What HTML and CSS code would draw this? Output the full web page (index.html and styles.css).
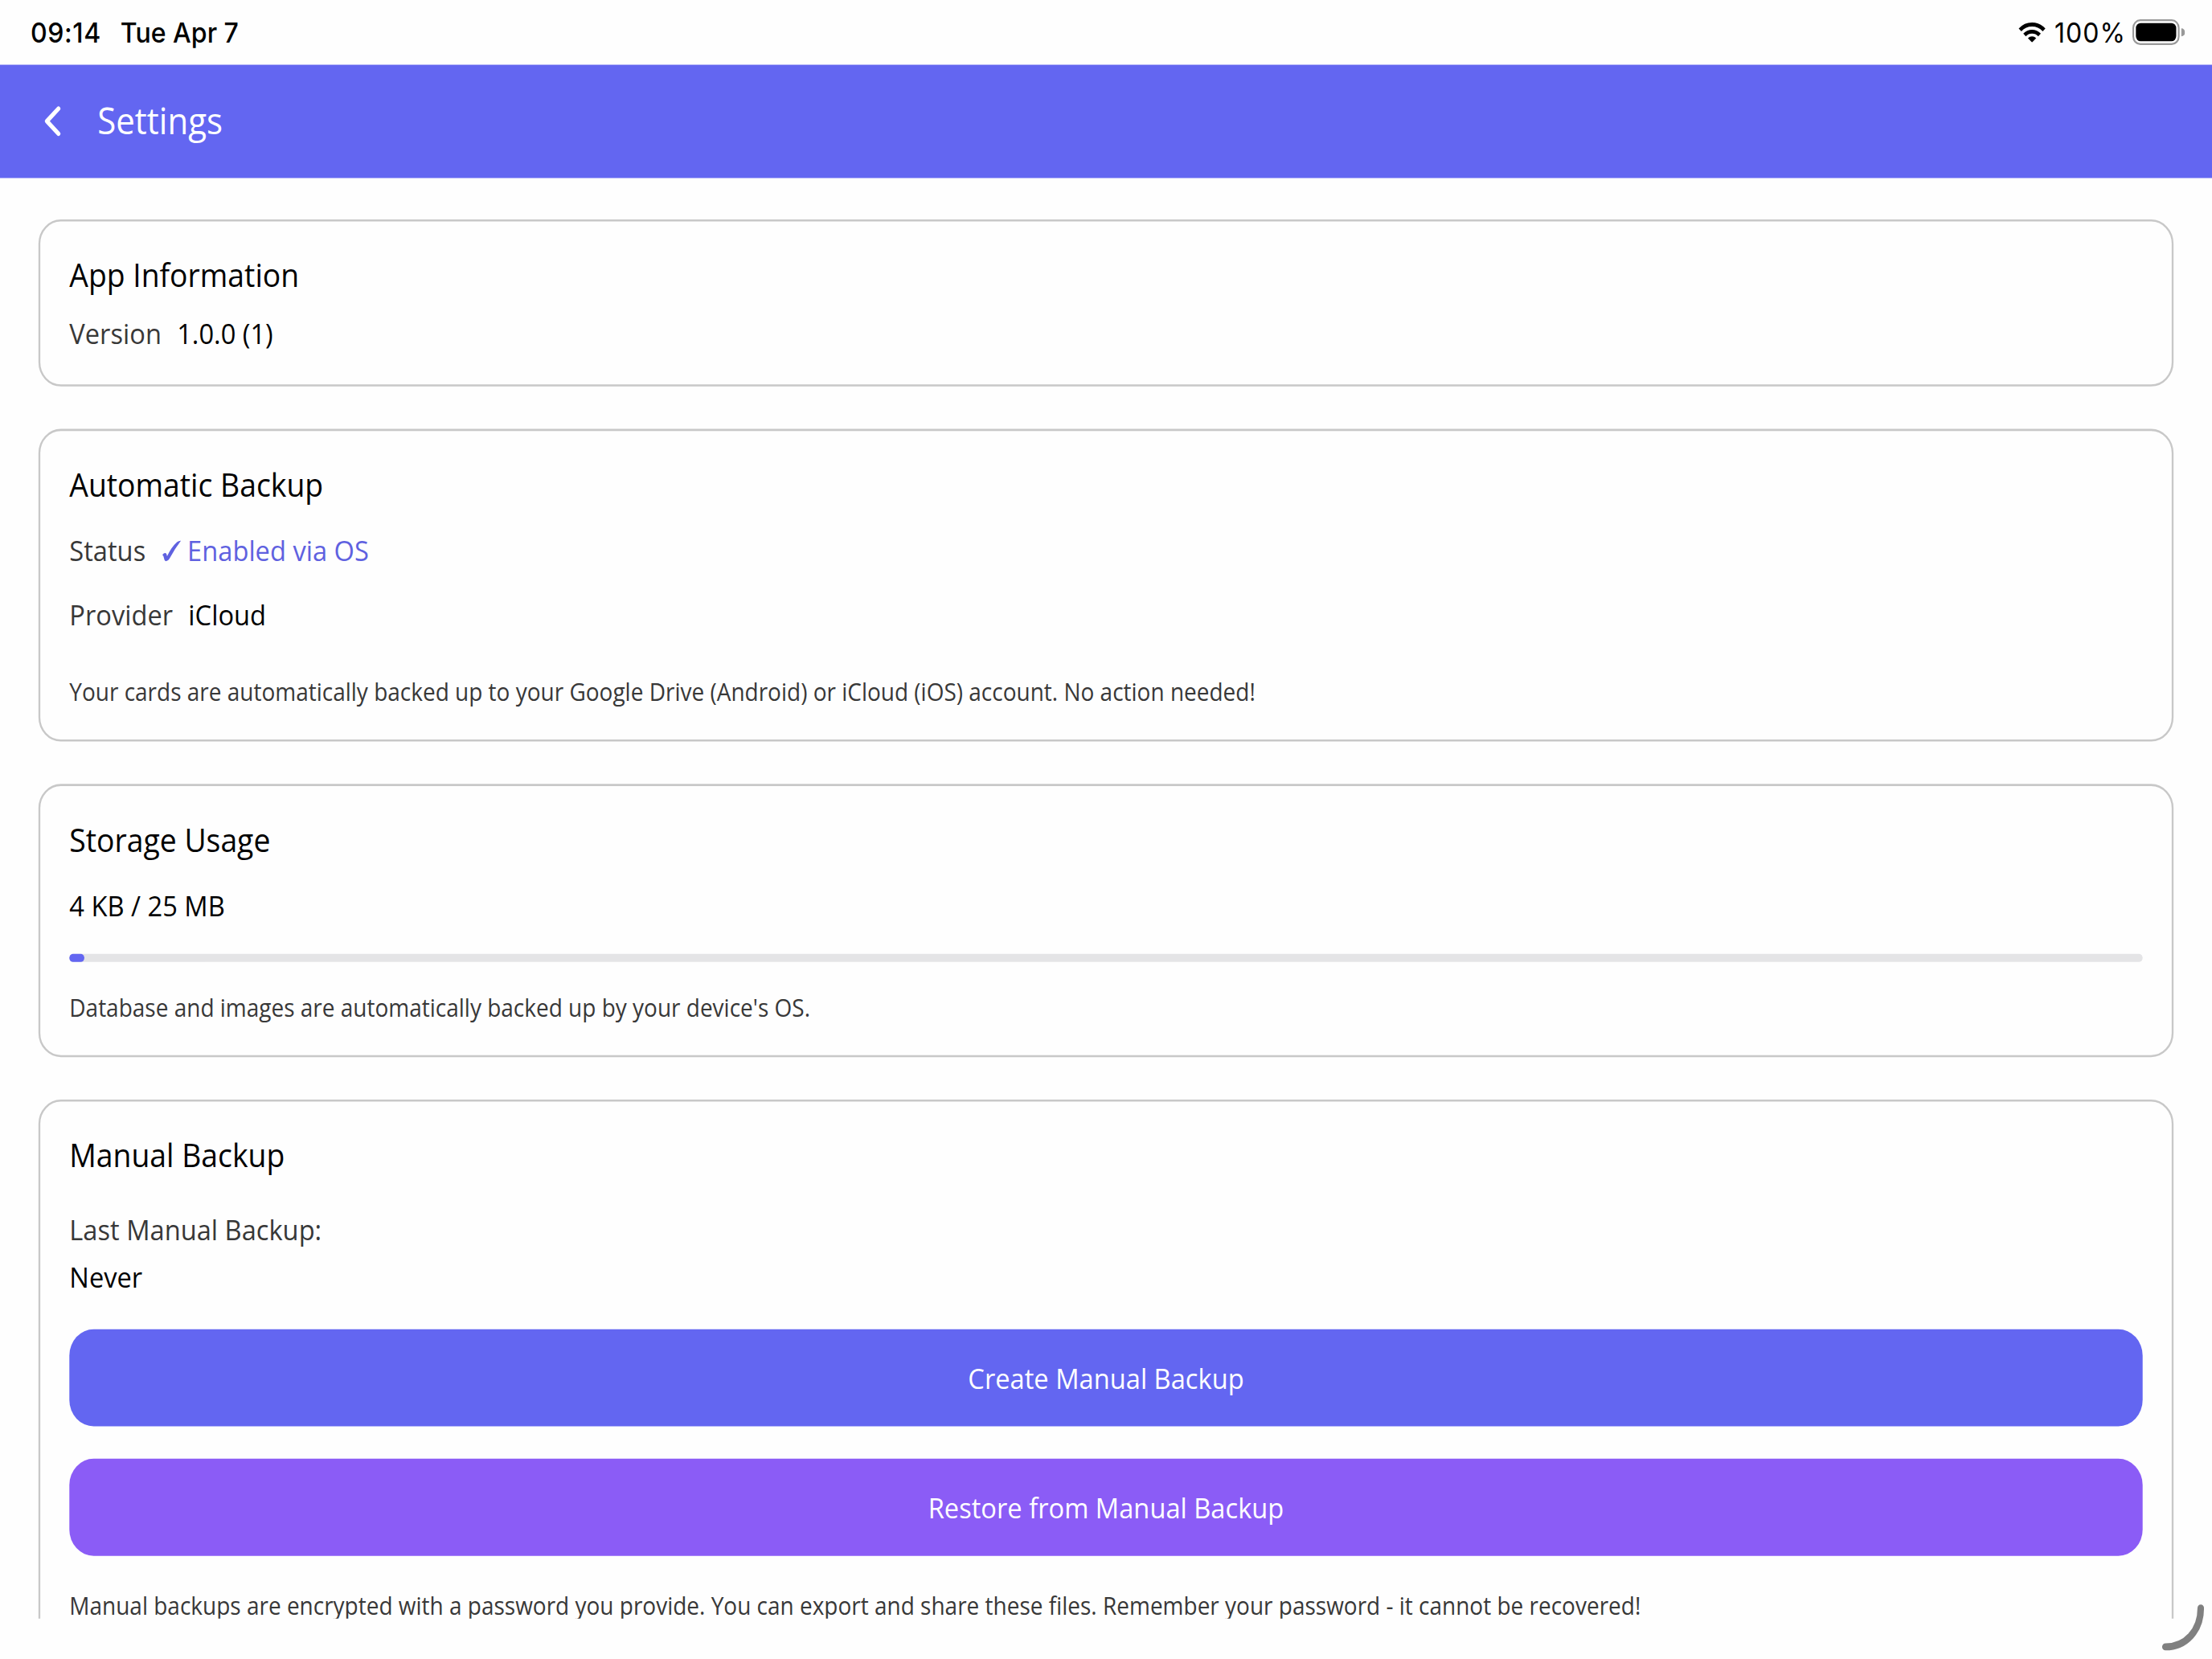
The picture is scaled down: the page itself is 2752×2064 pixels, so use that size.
FILE: index.html
```html
<!DOCTYPE html>
<html lang="en">
<head>
    <meta charset="UTF-8">
    <title>Settings</title>
    <link rel="stylesheet" href="styles.css">
</head>
<body>
    <div class="screen">
        <div class="status-bar">
            <span class="time">09:14</span>
            <span class="date">Tue Apr 7</span>
            <div class="status-icons">
                <svg class="wifi" viewBox="0 0 30 20">
                    <path d="M2.2 7.6 A18 18 0 0 1 27.8 7.6" fill="none" stroke="#000" stroke-width="4"/>
                    <path d="M7 12.6 A11.3 11.3 0 0 1 23 12.6" fill="none" stroke="#000" stroke-width="3.8"/>
                    <path d="M15 20 L10.6 15.8 A6.3 6.3 0 0 1 19.4 15.8 Z"/>
                </svg>
                <span class="percent">100%</span>
                <svg class="battery" viewBox="0 0 56 26">
                    <rect x="1" y="1" width="48.5" height="23.6" rx="7.5" fill="none" stroke="#999" stroke-width="1.8"/>
                    <rect x="3.8" y="3.8" width="43" height="18" rx="5"/>
                    <path d="M52.3 9 A4 4 0 0 1 52.3 17 Z" fill="#999"/>
                </svg>
            </div>
        </div>

        <div class="header">
            <svg class="back" viewBox="0 0 20 32">
                <path d="M15.4 3.4 L3 15.8 L15.4 28.2" fill="none" stroke="#fff" stroke-width="4.3" stroke-linecap="round" stroke-linejoin="round"/>
            </svg>
            <h1>Settings</h1>
        </div>

        <div class="content">
            <div class="card">
                <h2>App Information</h2>
                <div class="row row-tight">
                    <span class="label">Version</span>
                    <span>1.0.0 (1)</span>
                </div>
            </div>

            <div class="card">
                <h2>Automatic Backup</h2>
                <div class="row">
                    <span class="label">Status</span>
                    <span class="enabled">
                        <svg class="check" viewBox="0 0 22 28" preserveAspectRatio="none">
                            <path d="M0.3 19.2 Q2.2 16.6 4 17 Q5.4 17.6 5.8 21 Q11 9 17.6 2.4 Q19.6 0.6 22 0.8 Q15 11 8.6 24.4 Q6.8 28 4.2 27.8 Q2.6 27.4 2.3 24.4 Q1.8 20.4 0.3 19.2 Z"/>
                        </svg>Enabled via OS</span>
                </div>
                <div class="row">
                    <span class="label">Provider</span>
                    <span>iCloud</span>
                </div>
                <p class="note note-far">Your cards are automatically backed up to your Google Drive (Android) or iCloud (iOS) account. No action needed!</p>
            </div>

            <div class="card">
                <h2>Storage Usage</h2>
                <div class="row">4 KB / 25 MB</div>
                <div class="progress"><div class="progress-fill"></div></div>
                <p class="note note-near">Database and images are automatically backed up by your device's OS.</p>
            </div>

            <div class="card">
                <h2>Manual Backup</h2>
                <div class="last-backup">
                    <span class="label">Last Manual Backup:</span>
                    <span>Never</span>
                </div>
                <button class="btn btn-primary">Create Manual Backup</button>
                <button class="btn btn-secondary">Restore from Manual Backup</button>
                <p class="note">Manual backups are encrypted with a password you provide. You can export and share these files. Remember your password - it cannot be recovered!</p>
            </div>
        </div>

        <!-- corner handle -->
        <svg class="corner" viewBox="0 0 60 64">
            <path d="M48 13.7 C48 36 32 52 10.3 52" fill="none" stroke="#808080" stroke-width="7" stroke-linecap="round"/>
        </svg>
    </div>
</body>
</html>
```

FILE: styles.css
```css
* {
    box-sizing: border-box;
}
html, body {
    margin: 0;
    height: 2064px;
    overflow: hidden;
    background: #fefefe;
}
/* 2360x1640 tablet layout stretched to fill the window */
.screen {
    position: relative;
    width: 2360px;
    height: 1640px;
    display: flex;
    flex-direction: column;
    transform: scale(1.166102, 1.258537);
    transform-origin: 0 0;
    font-family: 'Open Sans', sans-serif;
    font-size: 28px;
    line-height: 38px;
    color: #000;
}
h1, h2, p {
    margin: 0;
    font-weight: 400;
}

.status-bar {
    height: 64px;
    flex: none;
    display: flex;
    align-items: center;
    padding: 0 29px 0 32.5px;
    font-family: Inter, sans-serif;
    font-size: 27.5px;
    font-weight: 500;
    white-space: nowrap;
}
.time {
    width: 96px;
    letter-spacing: 0.5px;
}
.status-icons {
    display: flex;
    align-items: center;
    margin-left: auto;
}
.wifi {
    width: 30px;
    height: 20px;
    margin-right: 9px;
}
.percent {
    width: 83px;
    font-weight: 400;
    letter-spacing: 0.8px;
}
.battery {
    width: 56px;
    height: 26px;
}

.header {
    height: 112px;
    flex: none;
    display: flex;
    align-items: center;
    padding: 0 0 0.5px 47px;
    background: #6366f1;
    color: #fff;
}
.back {
    width: 20px;
    height: 32px;
    margin-right: 37px;
}
h1 {
    font-size: 36px;
    line-height: 49px;
}

.content {
    height: 1424px;
    flex: none;
    overflow: hidden;
    padding: 41px 41px 0;
}
.card {
    border: 2px solid #c8c8c8;
    border-radius: 24px;
    padding: 31.5px 31px 31px;
    margin-bottom: 42px;
}
.card:first-child {
    padding: 31px 31px 31.5px;
}
h2 {
    font-size: 32px;
    line-height: 44px;
}
.row {
    display: flex;
    gap: 16.5px;
    margin-top: 24.3px;
}
.row-tight {
    margin-top: 16px;
}
.label {
    color: #383838;
}
.enabled {
    display: flex;
    align-items: center;
    color: #5f61e0;
}
.check {
    width: 20px;
    height: 21px;
    margin: 1px 7px 0 1px;
    fill: #5f61e0;
}
.note {
    font-size: 24px;
    line-height: 33px;
    color: #383838;
    margin-top: 32px;
}
.note-far {
    margin-top: 41px;
}
.note-near {
    margin-top: 28px;
}

.progress {
    height: 8px;
    margin-top: 28.5px;
    border-radius: 4px;
    background: #e4e4e6;
}
.progress-fill {
    width: 16px;
    height: 8px;
    border-radius: 4px;
    background: #6366f1;
}

.last-backup {
    display: flex;
    flex-direction: column;
    gap: 9px;
    margin-top: 32px;
}
.btn {
    display: block;
    width: 100%;
    height: 96px;
    margin-top: 32px;
    border: none;
    border-radius: 26px;
    font: inherit;
    color: #fff;
}
.btn-primary {
    margin-top: 33px;
    background: #6366f1;
}
.btn-secondary {
    background: #8b5cf6;
}

.corner {
    position: absolute;
    right: 0;
    bottom: 0;
    width: 60px;
    height: 64px;
}
```
